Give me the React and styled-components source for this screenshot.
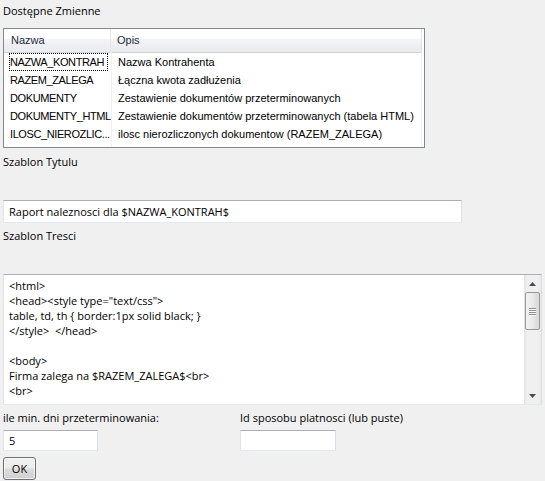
import React from 'react';
import styled, { createGlobalStyle } from 'styled-components';

const Global = createGlobalStyle`
    html, body {
        margin:0;
        padding:0;
        background:#f0f0f0;
    }
    body {
        font-family: "Open Sans", "Noto Sans", sans-serif;
        font-size:11px;
        color:#000;
    }
`;

const Page = styled.div`
    width:545px;
    height:481px;
    padding:0 3px;
    box-sizing:border-box;
    display:flex;
    flex-direction:column;
`;

const Label = styled.div`
    height:16px;
    line-height:16px;
    margin-top:${p => p.$top || 0}px;
    white-space:nowrap;
`;

const ListBox = styled.div`
    margin-top:9px;
    width:422px;
    height:120px;
    box-sizing:border-box;
    border:1px solid #828790;
    background:#fff;
    font-family: "Liberation Sans", Arial, sans-serif;
    font-size:11px;
    position:relative;
`;

const HeaderRow = styled.div`
    display:flex;
    height:23px;
    margin-right:2px;
    background:linear-gradient(#ffffff 0%, #ffffff 40%, #f3f4f6 45%, #e8eaee 100%);
    border-bottom:1px solid #d5d5d5;
    border-right:1px solid #dfe3e8;
`;

const HeaderCell = styled.div`
    width:${p => p.$w ? p.$w + 'px' : 'auto'};
    flex:${p => p.$w ? 'none' : 1};
    box-sizing:border-box;
    padding-left:${p => p.$pad}px;
    line-height:23px;
    color:#1e2b3c;
    border-right:${p => p.$w ? '1px solid #e3e7ed' : 'none'};
`;

const Row = styled.div`
    display:flex;
    height:18px;
    align-items:center;
`;

const Cell = styled.div`
    width:${p => p.$w ? p.$w + 'px' : 'auto'};
    flex:${p => p.$w ? 'none' : 1};
    box-sizing:border-box;
    padding-left:${p => p.$pad}px;
    height:18px;
    line-height:18px;
    white-space:nowrap;
    overflow:hidden;
    letter-spacing:${p => p.$tight ? '-0.4px' : 'normal'};
`;

const Name = styled.span`
    display:block;
    margin-left:-1px;
    width:99px;
    height:18px;
    box-sizing:border-box;
    padding-left:1px;
    line-height:18px;
    outline:${p => p.$focus ? '1px dotted #000' : 'none'};
    outline-offset:-1px;
`;

const ColLine = styled.div`
    position:absolute;
    top:23px;
    bottom:0;
    left:${p => p.$x}px;
    width:1px;
    background:#eef1f6;
`;

const TextBox = styled.div`
    margin-top:${p => p.$top || 0}px;
    width:${p => p.$w}px;
    height:${p => p.$h}px;
    box-sizing:border-box;
    background:#fff;
    border:1px solid #e3e9ef;
    border-top-color:#abadb3;
    border-left-color:#e2e3ea;
    border-right-color:#dbdfe6;
    padding-left:5px;
    line-height:${p => p.$h - 2}px;
    white-space:nowrap;
`;

const Memo = styled.div`
    margin-top:30px;
    width:539px;
    height:131px;
    box-sizing:border-box;
    background:#fff;
    border:1px solid #e3e9ef;
    border-top-color:#abadb3;
    border-left-color:#e2e3ea;
    border-right-color:#dbdfe6;
    display:flex;
`;

const MemoText = styled.pre`
    flex:1;
    margin:0;
    padding:3px 0 0 5px;
    font-family: "Open Sans", "Noto Sans", sans-serif;
    font-size:11px;
    line-height:15px;
    overflow:hidden;
`;

const ScrollBar = styled.div`
    width:17px;
    background:linear-gradient(90deg, #e3e3e3, #f0f0f0 20%, #f0f0f0 80%, #e8e8e8);
    display:flex;
    flex-direction:column;
    align-items:center;
`;

const Arrow = styled.div`
    height:17px;
    display:flex;
    align-items:center;
    justify-content:center;
`;

const Thumb = styled.div`
    width:15px;
    height:38px;
    box-sizing:border-box;
    border:1px solid #979797;
    border-radius:2px;
    background:linear-gradient(90deg, #f3f3f3, #e9e9e9 50%, #d8d8d8);
    display:flex;
    flex-direction:column;
    align-items:center;
    justify-content:center;
    gap:1px;
`;

const Grip = styled.div`
    width:7px;
    height:1px;
    background:#8f8f8f;
    box-shadow:0 1px 0 #fff;
`;

const Track = styled.div`
    flex:1;
`;

const FieldRow = styled.div`
    display:flex;
    margin-top:5px;
`;

const Field = styled.div`
    width:${p => p.$w}px;
    display:flex;
    flex-direction:column;
`;

const Button = styled.button`
    margin-top:6px;
    width:33px;
    height:23px;
    padding:0;
    border:1px solid #707070;
    border-radius:3px;
    background:linear-gradient(#f2f2f2 0%, #ebebeb 48%, #dddddd 52%, #cfcfcf 100%);
    box-shadow:inset 0 0 0 1px rgba(255,255,255,0.7);
    font-family: "Open Sans", "Noto Sans", sans-serif;
    font-size:11px;
    color:#000;
`;

const vars = [
    ['NAZWA_KONTRAH', 'Nazwa Kontrahenta'],
    ['RAZEM_ZALEGA', 'Łączna kwota zadłużenia'],
    ['DOKUMENTY', 'Zestawienie dokumentów przeterminowanych'],
    ['DOKUMENTY_HTML', 'Zestawienie dokumentów przeterminowanych (tabela HTML)'],
    ['ILOSC_NIEROZLIC...', 'ilosc nierozliczonych dokumentow (RAZEM_ZALEGA)'],
];

const memo = `<html>
<head><style type="text/css">
table, td, th { border:1px solid black; }
</style>  </head>

<body>
Firma zalega na $RAZEM_ZALEGA$<br>
<br>`;

export default function App() {
    return (
        <Page>
            <Global />
            <Label $top={3}>Dostępne Zmienne</Label>
            <ListBox>
                <HeaderRow>
                    <HeaderCell $w={107} $pad={7}>Nazwa</HeaderCell>
                    <HeaderCell $pad={6}>Opis</HeaderCell>
                </HeaderRow>
                <ColLine $x={107} />
                <ColLine $x={417} />
                {vars.map(([n, d], i) => (
                    <Row key={n}>
                        <Cell $w={107} $pad={6} $tight>
                            <Name $focus={i === 0}>{n}</Name>
                        </Cell>
                        <Cell $pad={7}>{d}</Cell>
                    </Row>
                ))}
            </ListBox>
            <Label $top={6}>Szablon Tytulu</Label>
            <TextBox $top={30} $w={459} $h={23}>Raport naleznosci dla $NAZWA_KONTRAH$</TextBox>
            <Label $top={5}>Szablon Tresci</Label>
            <Memo>
                <MemoText>{memo}</MemoText>
                <ScrollBar>
                    <Arrow>
                        <svg width="7" height="4" viewBox="0 0 7 4"><path d="M0 4 L3.5 0 L7 4 Z" fill="#4d4d4d" /></svg>
                    </Arrow>
                    <Thumb>
                        <Grip /><Grip /><Grip /><Grip />
                    </Thumb>
                    <Track />
                    <Arrow>
                        <svg width="7" height="4" viewBox="0 0 7 4"><path d="M0 0 L7 0 L3.5 4 Z" fill="#4d4d4d" /></svg>
                    </Arrow>
                </ScrollBar>
            </Memo>
            <FieldRow>
                <Field $w={237}>
                    <Label>ile min. dni przeterminowania:</Label>
                    <TextBox $top={4} $w={95} $h={21}>5</TextBox>
                </Field>
                <Field $w={200}>
                    <Label>Id sposobu platnosci (lub puste)</Label>
                    <TextBox $top={4} $w={96} $h={21}></TextBox>
                </Field>
            </FieldRow>
            <Button>OK</Button>
        </Page>
    );
}
